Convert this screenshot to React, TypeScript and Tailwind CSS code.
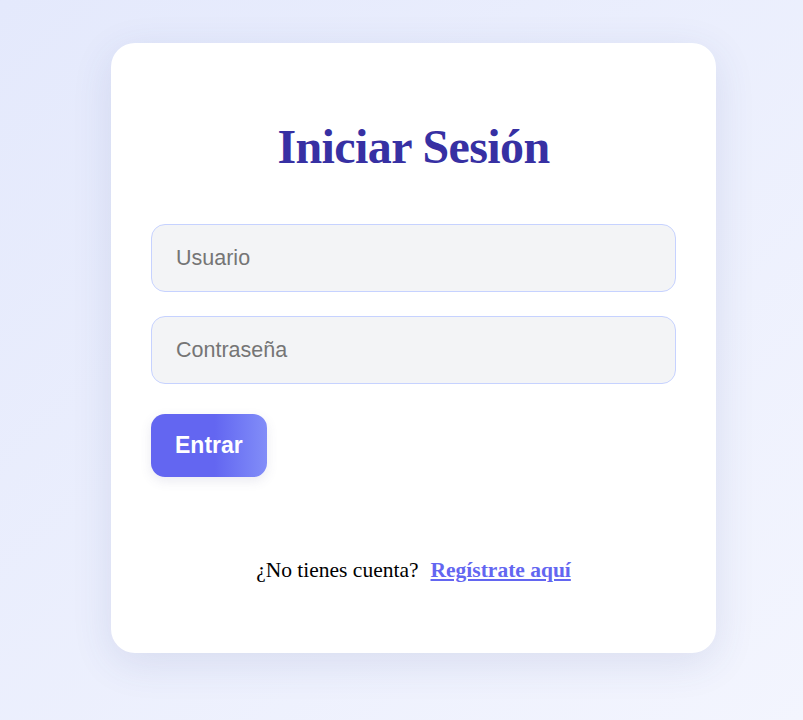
import { useState } from 'react'

export default function App() {
  const [usuario, setUsuario] = useState('')
  const [password, setPassword] = useState('')

  return (
    <div className="min-h-[720px] w-full bg-linear-to-br from-[#e4e9fc] to-[#f3f5fe] pt-[43px] pl-[111px]">
      <div className="w-[605px] h-[610px] bg-white rounded-[24px] shadow-[0_10px_40px_rgba(60,70,140,0.12)] px-10 pt-[76px]">
        <h2 className="text-center text-[48px] leading-[55px] font-bold text-[#3730a3] tracking-[-0.6px] font-['Liberation_Serif',serif]">
          Iniciar Sesión
        </h2>

        {/* Form */}
        <form className="mt-[50px] flex flex-col gap-6" onSubmit={(e) => e.preventDefault()}>
          <input
            type="text"
            placeholder="Usuario"
            className="w-full h-[68px] px-6 bg-gray-100 border border-indigo-200 rounded-[14px] text-[21.5px] text-gray-800 placeholder:text-[#757575] outline-none font-['Liberation_Sans',sans-serif]"
            value={usuario}
            onChange={(e) => setUsuario(e.target.value)}
          />
          <input
            type="password"
            placeholder="Contraseña"
            className="w-full h-[68px] px-6 bg-gray-100 border border-indigo-200 rounded-[14px] text-[21.5px] text-gray-800 placeholder:text-[#757575] outline-none font-['Liberation_Sans',sans-serif]"
            value={password}
            onChange={(e) => setPassword(e.target.value)}
          />
          <div className="mt-1.5">
            <button
              type="submit"
              className="h-[63px] px-6 rounded-[14px] bg-linear-to-r from-[#6366f1] from-55% to-[#828df8] text-white text-[23px] font-bold shadow-[0_4px_12px_rgba(80,80,140,0.12)] font-['Liberation_Sans',sans-serif]"
            >
              Entrar
            </button>
          </div>
        </form>

        {/* Footer */}
        <p className="mt-[77px] text-center text-[21.5px] text-black font-['Liberation_Serif',serif]">
          ¿No tienes cuenta?
          <a href="#" className="ml-3 font-bold text-[#6366f1] underline">
            Regístrate aquí
          </a>
        </p>
      </div>
    </div>
  )
}
